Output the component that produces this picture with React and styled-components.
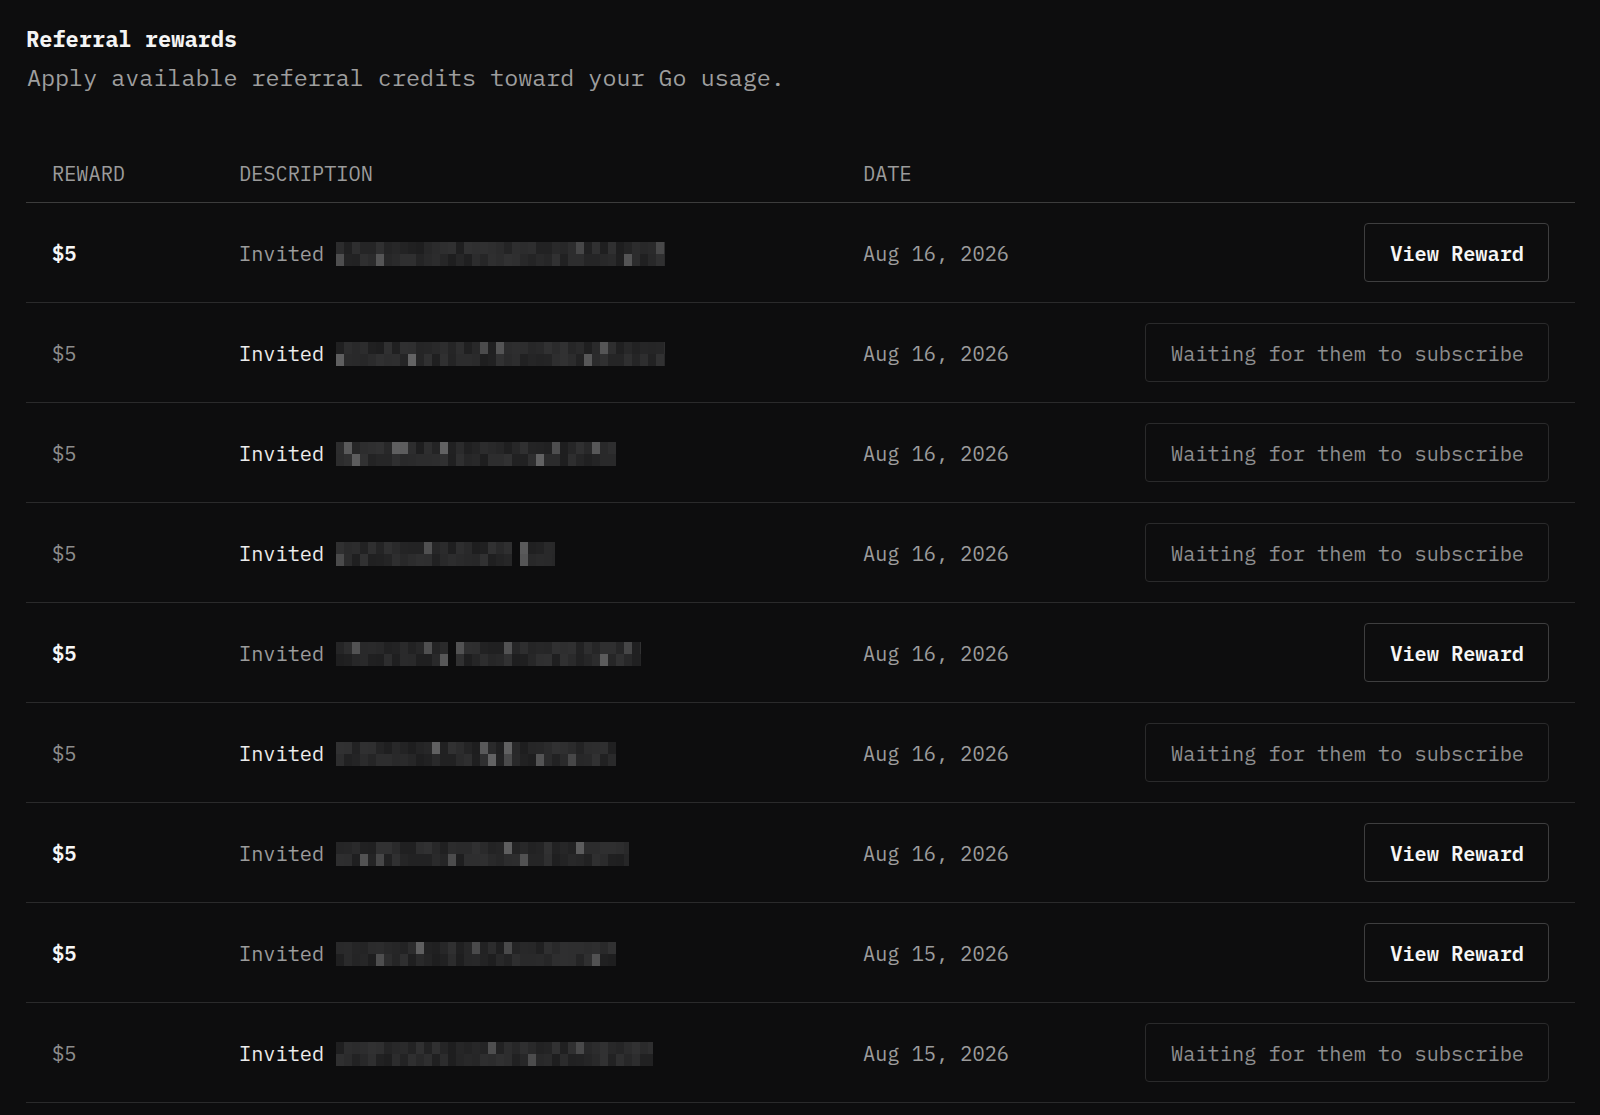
import React from "react";
import styled, { createGlobalStyle } from "styled-components";

const GlobalStyle = createGlobalStyle`
  html, body {
    margin: 0;
    background: #0d0d0e;
  }
  body {
    font-family: "IBM Plex Mono", "DejaVu Sans Mono", "Liberation Mono", monospace;
    color: #ededed;
  }
`;

const Page = styled.div`
  min-height: 1115px;
  box-sizing: border-box;
  padding: 24px 25px 0 26px;
  background: #0d0d0e;
`;

const Title = styled.h2`
  margin: 0;
  font-size: 22px;
  line-height: 30px;
  font-weight: 700;
  color: #f4f4f4;
`;

const Subtitle = styled.p`
  margin: 6px 0 0 1px;
  font-size: 23.4px;
  line-height: 34px;
  color: #9e9e9e;
`;

const Table = styled.div`
  margin-top: 52px;
  display: flex;
  flex-direction: column;
`;

const Row = styled.div`
  display: grid;
  grid-template-columns: 187px 624px 1fr auto;
  align-items: center;
  box-sizing: border-box;
  height: ${(p) => (p.$head ? "57px" : "100px")};
  padding: ${(p) => (p.$head ? "0 26px 2px 26px" : "0 26px")};
  border-bottom: 1px solid ${(p) => (p.$head ? "#3c3c3c" : "#2a2a2b")};
`;

const HeadCell = styled.div`
  font-size: 20.3px;
  color: #9b9b9b;
`;

const Amount = styled.div`
  padding-top: 2px;
  font-size: 20.3px;
  font-weight: ${(p) => (p.$active ? 600 : 400)};
  color: ${(p) => (p.$active ? "#f6f6f6" : "#8d8d8d")};
`;

const Desc = styled.div`
  padding-top: 2px;
  display: flex;
  align-items: center;
  gap: 12px;
  font-size: 20.3px;
  color: ${(p) => (p.$active ? "#9c9c9c" : "#ececec")};
`;

const DateCell = styled.div`
  padding-top: 2px;
  font-size: 20.3px;
  color: #9c9c9c;
`;

const Action = styled.button`
  font-family: inherit;
  font-size: 20.3px;
  height: 59px;
  margin-top: -1px;
  padding: 2px 24px 0 25px;
  border-radius: 4px;
  background: #0d0d0e;
  border: 1px solid ${(p) => (p.$primary ? "#3e3e3f" : "#2a2a2b")};
  color: ${(p) => (p.$primary ? "#f6f6f6" : "#8e8e8e")};
  font-weight: ${(p) => (p.$primary ? 600 : 400)};
  cursor: ${(p) => (p.$primary ? "pointer" : "default")};
`;

const rand = (seed) => {
  let s = seed;
  return () => {
    s = (s * 9301 + 49297) % 233280;
    return s / 233280;
  };
};

const Redacted = ({ width, seed, gap }) => {
  const r = rand(seed);
  const cells = [];
  const cw = 8;
  const cols = Math.ceil(width / cw);
  for (let c = 0; c < cols; c++) {
    const x = c * cw;
    if (gap && x >= gap[0] && x < gap[1]) continue;
    for (let row = 0; row < 2; row++) {
      const v = r();
      let g = 30 + Math.floor(v * 22);
      if (v > 0.9) g = 70 + Math.floor(r() * 30);
      cells.push(
        <rect
          key={`${c}-${row}`}
          x={x}
          y={row * 12}
          width={Math.min(cw, width - x)}
          height={12}
          fill={`rgb(${g},${g},${g + 1})`}
        />
      );
    }
  }
  return (
    <svg width={width} height={24} viewBox={`0 0 ${width} 24`}>
      {cells}
    </svg>
  );
};

const rows = [
  { date: "Aug 16, 2026", done: true, w: 329, seed: 11 },
  { date: "Aug 16, 2026", done: false, w: 329, seed: 23 },
  { date: "Aug 16, 2026", done: false, w: 280, seed: 37 },
  { date: "Aug 16, 2026", done: false, w: 219, seed: 41, gap: [173, 181] },
  { date: "Aug 16, 2026", done: true, w: 305, seed: 53, gap: [109, 113] },
  { date: "Aug 16, 2026", done: false, w: 280, seed: 67 },
  { date: "Aug 16, 2026", done: true, w: 293, seed: 79 },
  { date: "Aug 15, 2026", done: true, w: 280, seed: 83 },
  { date: "Aug 15, 2026", done: false, w: 317, seed: 97 },
];

export default function App() {
  return (
    <>
      <GlobalStyle />
      <Page>
        <Title>Referral rewards</Title>
        <Subtitle>Apply available referral credits toward your Go usage.</Subtitle>
        <Table>
          <Row $head>
            <HeadCell>REWARD</HeadCell>
            <HeadCell>DESCRIPTION</HeadCell>
            <HeadCell>DATE</HeadCell>
            <div />
          </Row>
          {rows.map((row, i) => (
            <Row key={i}>
              <Amount $active={row.done}>$5</Amount>
              <Desc $active={row.done}>
                Invited
                <Redacted width={row.w} seed={row.seed} gap={row.gap} />
              </Desc>
              <DateCell>{row.date}</DateCell>
              {row.done ? (
                <Action $primary>View Reward</Action>
              ) : (
                <Action disabled>Waiting for them to subscribe</Action>
              )}
            </Row>
          ))}
        </Table>
      </Page>
    </>
  );
}
